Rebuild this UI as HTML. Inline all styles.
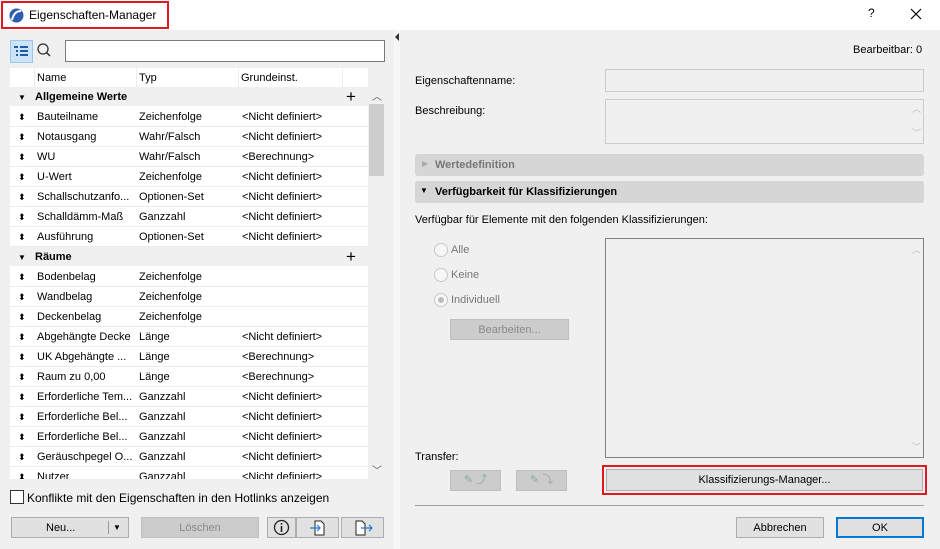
<!DOCTYPE html>
<html><head><meta charset="utf-8"><style>
*{box-sizing:border-box;margin:0;padding:0}
body{width:940px;height:549px;overflow:hidden;background:#f0f0f0;font-family:"Liberation Sans","DejaVu Sans",sans-serif;font-size:11px;color:#000;position:relative}
.a{position:absolute}
.title{left:0;top:0;width:940px;height:30px;background:#fff}
.btn{position:absolute;background:#e1e1e1;border:1px solid #adadad;text-align:center;font-size:11px}
.dis{background:#ccc;border-color:#bfbfbf;color:#8a8a8a}
.row{position:absolute;left:10px;width:358px;height:20px;background:#fff;border-bottom:1px solid #ececec;line-height:21px}
.row span{position:absolute;white-space:nowrap;overflow:hidden}
.row .s{left:8px;font-size:9px}
.grp{background:#f0f0f0;font-weight:bold;border-bottom:1px solid #fff}
.bar{position:absolute;left:415px;width:509px;height:22px;background:#d6d6d6;border-radius:3px;font-weight:bold;line-height:22px;padding-left:20px}
.radio{position:absolute;width:14px;height:14px;border:1px solid #c8c8c8;border-radius:50%;background:#f7f7f7}
.lbl{position:absolute;color:#777}
</style></head><body>
<div class="a title"></div>
<div class="a" style="left:1px;top:1px;width:168px;height:28px;border:2px solid #e0181f"></div>
<svg class="a" style="left:9px;top:8px" width="15" height="15"><circle cx="7.5" cy="7.5" r="7" fill="#2b5fb3"/><path d="M3 12 Q5 3 12 3" stroke="#fff" stroke-width="2" fill="none"/></svg>
<div class="a" style="left:29px;top:8px;font-size:12px">Eigenschaften-Manager</div>
<div class="a" style="left:868px;top:6px;font-size:12px">?</div>
<svg class="a" style="left:910px;top:8px" width="12" height="12"><path d="M1 1L11 11M11 1L1 11" stroke="#000" stroke-width="1.2"/></svg>
<div class="a" style="left:394px;top:30px;width:6px;height:519px;background:#f6f6f6"></div>
<div class="a" style="left:395px;top:33px;width:0;height:0;border:4px solid transparent;border-right:4px solid #333;border-left:0"></div>

<div class="a" style="left:10px;top:40px;width:23px;height:23px;background:#cce4f7;border:1px solid #99c9ef"></div>
<svg class="a" style="left:13px;top:44px" width="17" height="15"><g fill="#1e5aa8"><rect x="1" y="2" width="4" height="2"/><rect x="7" y="2" width="8" height="2"/><rect x="3" y="6" width="2" height="2"/><rect x="7" y="6" width="8" height="2"/><rect x="3" y="10" width="2" height="2"/><rect x="7" y="10" width="8" height="2"/></g></svg>
<svg class="a" style="left:36px;top:42px" width="16" height="16"><circle cx="7" cy="7" r="5" stroke="#333" stroke-width="1.3" fill="none"/><path d="M10.5 10.5 L14 14" stroke="#333" stroke-width="1.5"/></svg>
<div class="a" style="left:65px;top:40px;width:320px;height:22px;background:#fff;border:1px solid #7a7a7a"></div>

<div class="a" style="left:10px;top:68px;width:358px;height:20px;background:#fff"></div>
<div class="a" style="left:34px;top:68px;width:1px;height:20px;background:#eee"></div>
<div class="a" style="left:136px;top:68px;width:1px;height:20px;background:#eee"></div>
<div class="a" style="left:238px;top:68px;width:1px;height:20px;background:#eee"></div>
<div class="a" style="left:342px;top:68px;width:1px;height:20px;background:#eee"></div>
<div class="a" style="left:37px;top:72px">Name</div><div class="a" style="left:139px;top:72px">Typ</div><div class="a" style="left:241px;top:72px">Grundeinst.</div>

<div style="position:absolute;left:0;top:0;width:400px;height:479px;overflow:hidden">
<div class="row grp" style="top:87px"><span style="left:8px;font-size:8px;font-weight:normal">▼</span><span style="left:25px">Allgemeine Werte</span><span style="left:336px;font-size:17px;font-weight:normal;line-height:19px">+</span></div>
<div class="row" style="top:107px"><span class="s">⬍</span><span style="left:27px">Bauteilname</span><span style="left:129px">Zeichenfolge</span><span style="left:232px">&lt;Nicht definiert&gt;</span></div>
<div class="row" style="top:127px"><span class="s">⬍</span><span style="left:27px">Notausgang</span><span style="left:129px">Wahr/Falsch</span><span style="left:232px">&lt;Nicht definiert&gt;</span></div>
<div class="row" style="top:147px"><span class="s">⬍</span><span style="left:27px">WU</span><span style="left:129px">Wahr/Falsch</span><span style="left:232px">&lt;Berechnung&gt;</span></div>
<div class="row" style="top:167px"><span class="s">⬍</span><span style="left:27px">U-Wert</span><span style="left:129px">Zeichenfolge</span><span style="left:232px">&lt;Nicht definiert&gt;</span></div>
<div class="row" style="top:187px"><span class="s">⬍</span><span style="left:27px">Schallschutzanfo...</span><span style="left:129px">Optionen-Set</span><span style="left:232px">&lt;Nicht definiert&gt;</span></div>
<div class="row" style="top:207px"><span class="s">⬍</span><span style="left:27px">Schalldämm-Maß</span><span style="left:129px">Ganzzahl</span><span style="left:232px">&lt;Nicht definiert&gt;</span></div>
<div class="row" style="top:227px"><span class="s">⬍</span><span style="left:27px">Ausführung</span><span style="left:129px">Optionen-Set</span><span style="left:232px">&lt;Nicht definiert&gt;</span></div>
<div class="row grp" style="top:247px"><span style="left:8px;font-size:8px;font-weight:normal">▼</span><span style="left:25px">Räume</span><span style="left:336px;font-size:17px;font-weight:normal;line-height:19px">+</span></div>
<div class="row" style="top:267px"><span class="s">⬍</span><span style="left:27px">Bodenbelag</span><span style="left:129px">Zeichenfolge</span></div>
<div class="row" style="top:287px"><span class="s">⬍</span><span style="left:27px">Wandbelag</span><span style="left:129px">Zeichenfolge</span></div>
<div class="row" style="top:307px"><span class="s">⬍</span><span style="left:27px">Deckenbelag</span><span style="left:129px">Zeichenfolge</span></div>
<div class="row" style="top:327px"><span class="s">⬍</span><span style="left:27px">Abgehängte Decke</span><span style="left:129px">Länge</span><span style="left:232px">&lt;Nicht definiert&gt;</span></div>
<div class="row" style="top:347px"><span class="s">⬍</span><span style="left:27px">UK Abgehängte ...</span><span style="left:129px">Länge</span><span style="left:232px">&lt;Berechnung&gt;</span></div>
<div class="row" style="top:367px"><span class="s">⬍</span><span style="left:27px">Raum zu 0,00</span><span style="left:129px">Länge</span><span style="left:232px">&lt;Berechnung&gt;</span></div>
<div class="row" style="top:387px"><span class="s">⬍</span><span style="left:27px">Erforderliche Tem...</span><span style="left:129px">Ganzzahl</span><span style="left:232px">&lt;Nicht definiert&gt;</span></div>
<div class="row" style="top:407px"><span class="s">⬍</span><span style="left:27px">Erforderliche Bel...</span><span style="left:129px">Ganzzahl</span><span style="left:232px">&lt;Nicht definiert&gt;</span></div>
<div class="row" style="top:427px"><span class="s">⬍</span><span style="left:27px">Erforderliche Bel...</span><span style="left:129px">Ganzzahl</span><span style="left:232px">&lt;Nicht definiert&gt;</span></div>
<div class="row" style="top:447px"><span class="s">⬍</span><span style="left:27px">Geräuschpegel O...</span><span style="left:129px">Ganzzahl</span><span style="left:232px">&lt;Nicht definiert&gt;</span></div>
<div class="row" style="top:467px"><span class="s">⬍</span><span style="left:27px">Nutzer</span><span style="left:129px">Ganzzahl</span><span style="left:232px">&lt;Nicht definiert&gt;</span></div>
</div>
<div class="a" style="left:369px;top:104px;width:15px;height:72px;background:#cdcdcd"></div>
<div class="a" style="left:372px;top:88px;color:#555;font-size:10px">︿</div>
<div class="a" style="left:372px;top:462px;color:#555;font-size:10px">﹀</div>

<div class="a" style="left:10px;top:490px;width:14px;height:14px;border:1px solid #333;background:#fff"></div>
<div class="a" style="left:27px;top:491px;font-size:12px">Konflikte mit den Eigenschaften in den Hotlinks anzeigen</div>
<div class="btn" style="left:11px;top:517px;width:118px;height:21px;line-height:20px"><span style="position:absolute;left:34px">Neu...</span><span style="position:absolute;left:96px;top:3px;width:1px;height:13px;background:#999"></span><span style="position:absolute;left:101px;top:0;font-size:8px">▼</span></div>
<div class="btn dis" style="left:141px;top:517px;width:118px;height:21px;line-height:20px">Löschen</div>
<div class="btn" style="left:267px;top:517px;width:29px;height:21px"><svg width="17" height="17" style="margin-top:1px"><circle cx="8.5" cy="8.5" r="7" stroke="#222" fill="none" stroke-width="1.3"/><rect x="7.7" y="7" width="1.6" height="6" fill="#222"/><rect x="7.7" y="4" width="1.6" height="1.6" fill="#222"/></svg></div>
<div class="btn" style="left:296px;top:517px;width:43px;height:21px"><svg width="22" height="18" style="margin-top:1px"><path d="M8 2h6l3 3v11H8z" stroke="#222" fill="#fff"/><path d="M3 9h10M10 6l3 3-3 3" stroke="#1e78d7" fill="none" stroke-width="1.2"/></svg></div>
<div class="btn" style="left:341px;top:517px;width:43px;height:21px"><svg width="22" height="18" style="margin-top:1px"><path d="M4 2h6l3 3v11H4z" stroke="#222" fill="#fff"/><path d="M9 9h11M17 6l3 3-3 3" stroke="#1e78d7" fill="none" stroke-width="1.2"/></svg></div>

<div class="a" style="left:853px;top:44px">Bearbeitbar: 0</div>
<div class="a" style="left:415px;top:75px">Eigenschaftenname:</div>
<div class="a" style="left:605px;top:69px;width:319px;height:23px;border:1px solid #ccc"></div>
<div class="a" style="left:415px;top:105px">Beschreibung:</div>
<div class="a" style="left:605px;top:99px;width:319px;height:45px;border:1px solid #ccc"></div>
<div class="a" style="left:912px;top:102px;color:#bbb;font-size:9px">︿</div>
<div class="a" style="left:912px;top:126px;color:#bbb;font-size:9px">﹀</div>
<div class="bar" style="top:154px;color:#777">Wertedefinition</div>
<div class="a" style="left:422px;top:159px;color:#aaa;font-size:8px">▶</div>
<div class="bar" style="top:181px">Verfügbarkeit für Klassifizierungen</div>
<div class="a" style="left:420px;top:186px;font-size:8px">▼</div>
<div class="a" style="left:415px;top:214px">Verfügbar für Elemente mit den folgenden Klassifizierungen:</div>
<div class="radio" style="left:434px;top:243px"></div><div class="lbl" style="left:451px;top:244px">Alle</div>
<div class="radio" style="left:434px;top:268px"></div><div class="lbl" style="left:451px;top:269px">Keine</div>
<div class="radio" style="left:434px;top:293px"><div style="margin:3px;width:6px;height:6px;border-radius:50%;background:#bbb"></div></div><div class="lbl" style="left:451px;top:294px">Individuell</div>
<div class="btn dis" style="left:450px;top:319px;width:119px;height:21px;line-height:20px">Bearbeiten...</div>
<div class="a" style="left:605px;top:238px;width:319px;height:220px;border:1px solid #828282"></div>
<div class="a" style="left:912px;top:243px;color:#bbb;font-size:9px">︿</div>
<div class="a" style="left:912px;top:440px;color:#bbb;font-size:9px">﹀</div>
<div class="a" style="left:415px;top:451px">Transfer:</div>
<div class="btn dis" style="left:450px;top:470px;width:51px;height:21px;color:#8aa;line-height:19px">✎ ⤴</div>
<div class="btn dis" style="left:516px;top:470px;width:51px;height:21px;color:#8aa;line-height:19px">✎ ⤵</div>
<div class="a" style="left:602px;top:465px;width:325px;height:30px;border:2px solid #e0181f"></div>
<div class="btn" style="left:606px;top:469px;width:317px;height:22px;line-height:21px">Klassifizierungs-Manager...</div>
<div class="a" style="left:415px;top:505px;width:509px;height:1px;background:#a0a0a0"></div>
<div class="btn" style="left:736px;top:517px;width:88px;height:21px;line-height:20px">Abbrechen</div>
<div class="btn" style="left:836px;top:517px;width:88px;height:21px;line-height:18px;border:2px solid #0078d7">OK</div>
</body></html>
